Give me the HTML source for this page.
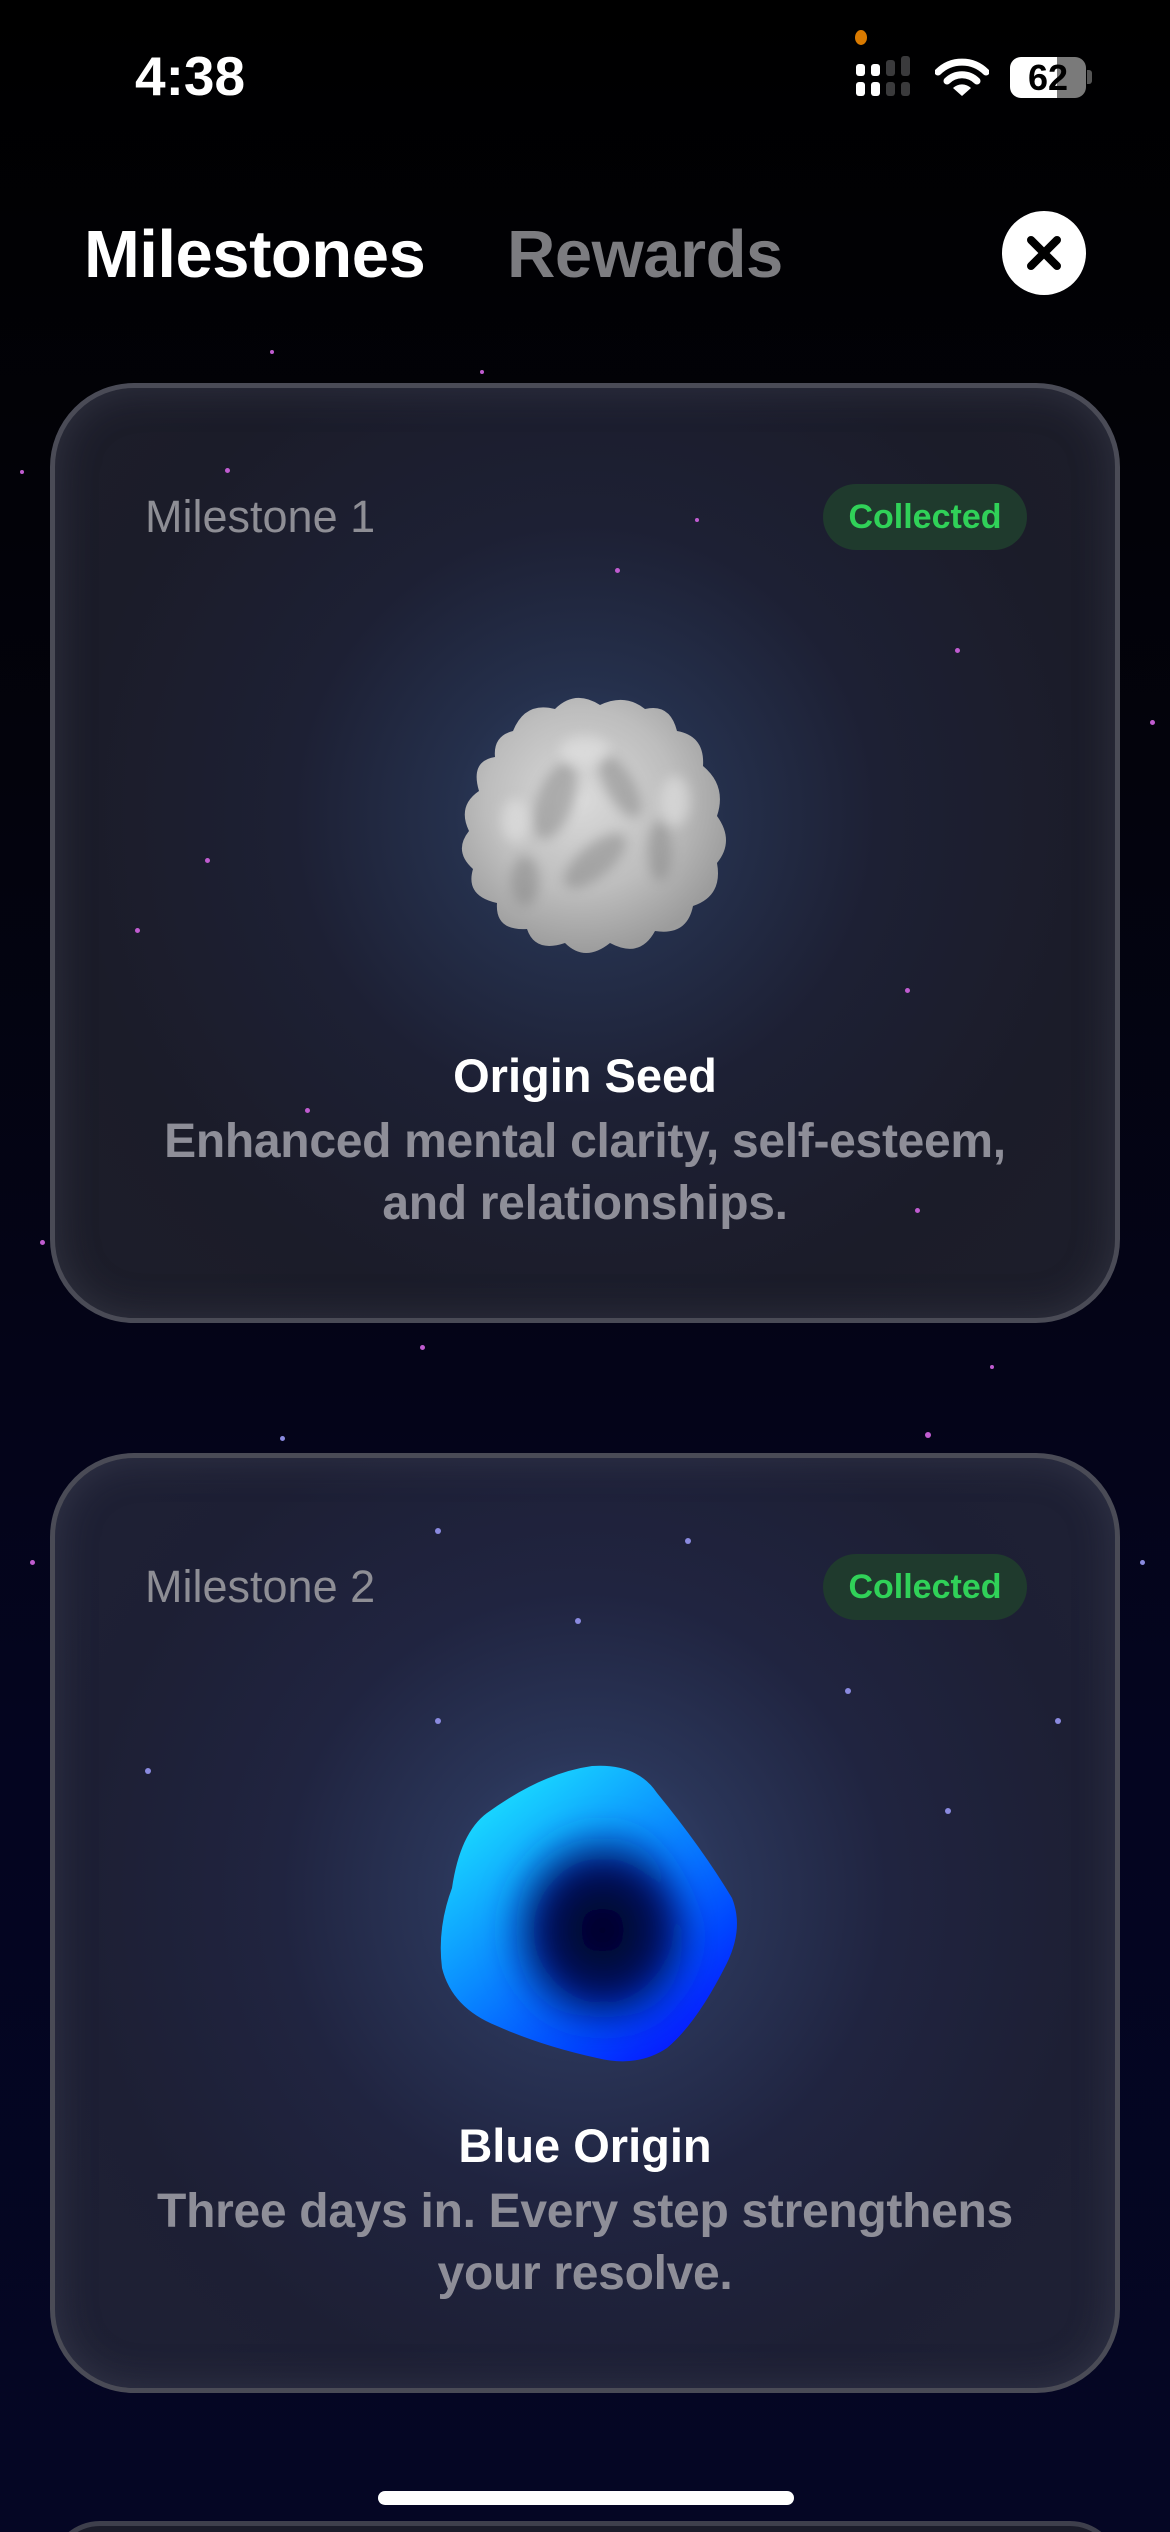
<!DOCTYPE html>
<html style="background:#050624"><head><meta charset="utf-8"><style>
*{margin:0;padding:0;box-sizing:border-box}
html,body{width:1170px;height:2532px;overflow:hidden}
body{font-family:"Liberation Sans",sans-serif}
#w{position:relative;width:1170px;height:2532px;overflow:hidden;background:linear-gradient(180deg,#000 0%,#03030c 30%,#040520 70%,#050624 100%)}
.abs{position:absolute}
.card{position:absolute;left:50px;width:1070px;height:940px;border-radius:84px;border:5px solid #4a4b56;background:radial-gradient(circle at 50% 46%,#34466e 0%,#25304c 18%,#1d2034 40%,#1b1c29 70%,#1d1e2a 100%);box-shadow:inset 0 0 40px rgba(90,92,110,.35);overflow:hidden}
.card2{background:radial-gradient(circle at 50% 47%,#3a4e7c 0%,#2a3558 20%,#202440 42%,#1d1f34 70%,#1f2134 100%)}
.ms{position:absolute;left:90px;font-size:45px;color:#8e8e95}
.pill{position:absolute;left:768px;width:204px;height:66px;border-radius:33px;background:#1f3a2d;color:#30d158;font-weight:bold;font-size:34px;text-align:center;line-height:66px}
.ttl{position:absolute;left:0;width:100%;text-align:center;color:#fff;font-weight:bold;font-size:47px}
.desc{position:absolute;left:0;width:100%;text-align:center;color:#8e8e98;font-weight:bold;font-size:48px;line-height:62px;letter-spacing:-0.3px}
.st{position:absolute;border-radius:50%;background:#c05cd0}
</style></head><body><div id="w">
<div class="st" style="left:855px;top:30px;width:12px;height:15px;background:#d97a00"></div>
<div class="st" style="left:40px;top:1240px;width:5px;height:5px"></div>
<div class="st" style="left:20px;top:470px;width:4px;height:4px"></div>
<div class="st" style="left:1150px;top:720px;width:5px;height:5px"></div>
<div class="st" style="left:1140px;top:1560px;width:5px;height:5px;background:#8a8ae0"></div>
<div class="st" style="left:30px;top:1560px;width:5px;height:5px;background:#c05cd0"></div>
<div class="st" style="left:280px;top:1436px;width:5px;height:5px;background:#8a8ae0"></div>
<div class="st" style="left:925px;top:1432px;width:6px;height:6px;background:#c05cd0"></div>
<div class="st" style="left:420px;top:1345px;width:5px;height:5px"></div>
<div class="st" style="left:990px;top:1365px;width:4px;height:4px"></div>
<div class="st" style="left:270px;top:350px;width:4px;height:4px"></div>
<div class="st" style="left:480px;top:370px;width:4px;height:4px"></div>

<div class="abs" style="left:135px;top:44px;color:#fff;font-size:55px;font-weight:bold">4:38</div>
<svg class="abs" style="left:854px;top:56px" width="60" height="42">
<rect x="2" y="8" width="9" height="12" rx="3" fill="#fff"/><rect x="2" y="26" width="9" height="14" rx="3" fill="#fff"/>
<rect x="17" y="8" width="9" height="12" rx="3" fill="#fff"/><rect x="17" y="26" width="9" height="14" rx="3" fill="#fff"/>
<rect x="32" y="4" width="9" height="16" rx="3" fill="#3a3a3c"/><rect x="32" y="26" width="9" height="14" rx="3" fill="#3a3a3c"/>
<rect x="47" y="0" width="9" height="20" rx="3" fill="#3a3a3c"/><rect x="47" y="26" width="9" height="14" rx="3" fill="#3a3a3c"/>
</svg>
<svg class="abs" style="left:935px;top:58px" width="54" height="40" viewBox="0 0 54 40">
<path d="M3 14 A34 34 0 0 1 51 14" stroke="#fff" stroke-width="7" fill="none" stroke-linecap="round"/>
<path d="M12 23 A21 21 0 0 1 42 23" stroke="#fff" stroke-width="7" fill="none" stroke-linecap="round"/>
<path d="M27 38 L18 30 A13 13 0 0 1 36 30 Z" fill="#fff"/>
</svg>
<div class="abs" style="left:1010px;top:57px;width:76px;height:41px;border-radius:11px;background:linear-gradient(90deg,#fff 0 62%,#7a7a7a 62%);color:#000;font-weight:bold;font-size:36px;text-align:center;line-height:41px">62</div>
<div class="abs" style="left:1087px;top:70px;width:5px;height:14px;border-radius:0 3px 3px 0;background:#555"></div>

<div class="abs" style="left:84px;top:216px;color:#fff;font-size:67px;font-weight:bold;letter-spacing:-0.5px">Milestones</div>
<div class="abs" style="left:507px;top:216px;color:#7c7c80;font-size:67px;font-weight:bold;letter-spacing:-0.5px">Rewards</div>
<div class="abs" style="left:1002px;top:211px;width:84px;height:84px;border-radius:50%;background:#fff"></div>
<svg class="abs" style="left:1002px;top:211px" width="84" height="84"><path d="M29 29 L55 55 M55 29 L29 55" stroke="#000" stroke-width="8" stroke-linecap="round"/></svg>

<div class="card" style="top:383px">
<div class="st" style="left:170px;top:80px;width:5px;height:5px"></div>
<div class="st" style="left:560px;top:180px;width:5px;height:5px"></div>
<div class="st" style="left:900px;top:260px;width:5px;height:5px"></div>
<div class="st" style="left:150px;top:470px;width:5px;height:5px"></div>
<div class="st" style="left:80px;top:540px;width:5px;height:5px"></div>
<div class="st" style="left:850px;top:600px;width:5px;height:5px"></div>
<div class="st" style="left:250px;top:720px;width:5px;height:5px"></div>
<div class="st" style="left:860px;top:820px;width:5px;height:5px"></div>
<div class="st" style="left:640px;top:130px;width:4px;height:4px"></div>
<div class="ms" style="top:103px">Milestone 1</div>
<div class="pill" style="top:96px">Collected</div>
<svg class="abs" style="left:400px;top:303px" width="280" height="272" viewBox="0 0 280 272">
<defs><radialGradient id="rk" cx="45%" cy="40%" r="60%"><stop offset="0" stop-color="#dadada"/><stop offset=".6" stop-color="#bdbdbd"/><stop offset="1" stop-color="#9c9c9c"/></radialGradient>
<filter id="bf"><feGaussianBlur stdDeviation="6"/></filter></defs>
<path d="M58 40 Q70 10 100 18 Q120 -2 145 14 Q170 2 190 18 Q215 12 222 40 Q250 45 248 75 Q272 95 262 125 Q280 150 262 172 Q268 205 238 215 Q232 245 200 240 Q185 268 155 252 Q130 272 110 252 Q80 262 72 238 Q40 240 42 212 Q10 205 18 178 Q-2 160 14 140 Q2 115 24 100 Q15 70 40 66 Q38 45 58 40 Z" fill="url(#rk)"/>
<g filter="url(#bf)" opacity=".45" fill="#7d7d7d">
<ellipse cx="100" cy="110" rx="18" ry="40" transform="rotate(20 100 110)"/>
<ellipse cx="165" cy="95" rx="14" ry="35" transform="rotate(-30 165 95)"/>
<ellipse cx="140" cy="170" rx="16" ry="38" transform="rotate(50 140 170)"/>
<ellipse cx="205" cy="160" rx="12" ry="30"/>
<ellipse cx="70" cy="190" rx="14" ry="25"/>
</g>
<g filter="url(#bf)" opacity=".5" fill="#e8e8e8">
<ellipse cx="130" cy="60" rx="25" ry="15"/><ellipse cx="220" cy="110" rx="15" ry="25"/><ellipse cx="60" cy="130" rx="14" ry="22"/>
</g>
</svg>
<div class="ttl" style="top:660px">Origin Seed</div>
<div class="desc" style="top:723px">Enhanced mental clarity, self-esteem,<br>and relationships.</div>
</div>

<div class="card card2" style="top:1453px">
<div class="st" style="left:380px;top:70px;width:6px;height:6px;background:#8a8ae0"></div>
<div class="st" style="left:630px;top:80px;width:6px;height:6px;background:#8a8ae0"></div>
<div class="st" style="left:520px;top:160px;width:6px;height:6px;background:#8a8ae0"></div>
<div class="st" style="left:790px;top:230px;width:6px;height:6px;background:#8a8ae0"></div>
<div class="st" style="left:380px;top:260px;width:6px;height:6px;background:#8a8ae0"></div>
<div class="st" style="left:90px;top:310px;width:6px;height:6px;background:#8a8ae0"></div>
<div class="st" style="left:890px;top:350px;width:6px;height:6px;background:#8a8ae0"></div>
<div class="st" style="left:1000px;top:260px;width:6px;height:6px;background:#8a8ae0"></div>
<div class="ms" style="top:103px">Milestone 2</div>
<div class="pill" style="top:96px">Collected</div>
<svg class="abs" style="left:377px;top:280px" width="330" height="340" viewBox="0 0 330 340">
<defs>
<linearGradient id="bl" x1="0.1" y1="0" x2="0.9" y2="1"><stop offset="0" stop-color="#1ef0ff"/><stop offset=".45" stop-color="#0a8cff"/><stop offset=".75" stop-color="#0046ff"/><stop offset="1" stop-color="#0a08ff"/></linearGradient>
<radialGradient id="core" cx="55%" cy="55%" r="50%"><stop offset="0" stop-color="#01031e"/><stop offset=".55" stop-color="#020c5a"/><stop offset="1" stop-color="#0636b0" stop-opacity="0"/></radialGradient>
<filter id="bb"><feGaussianBlur stdDeviation="14"/></filter>
</defs>
<path d="M20 150 Q28 95 55 75 Q110 35 160 28 Q205 25 225 55 Q270 110 300 160 Q312 190 295 225 Q265 285 235 310 Q205 330 165 320 Q110 308 65 288 Q20 270 10 230 Q5 190 20 150 Z" fill="url(#bl)"/>
<path d="M55 140 Q70 95 120 75 Q180 60 215 95 Q255 145 265 195 Q262 250 225 282 Q180 300 125 285 Q65 265 55 210 Z" fill="url(#core)" filter="url(#bb)"/>
</svg>
<div class="ttl" style="top:660px">Blue Origin</div>
<div class="desc" style="top:723px">Three days in. Every step strengthens<br>your resolve.</div>
</div>

<div class="abs" style="left:50px;top:2521px;width:1070px;height:100px;border-radius:84px;border:5px solid #3e3f4c;background:#1b1c2a"></div>
<div class="abs" style="left:378px;top:2491px;width:416px;height:14px;border-radius:7px;background:#fff"></div>
</div></body></html>
